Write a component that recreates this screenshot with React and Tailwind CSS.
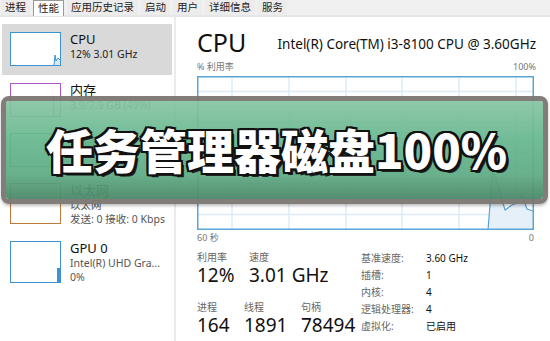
import React from "react";

const FONT = { fontFamily: "'Segoe UI', 'Noto Sans', 'Noto Sans CJK SC', sans-serif" };

const TABS = ["进程", "性能", "应用历史记录", "启动", "用户", "详细信息", "服务"];

function Thumb({ color, h, children }) {
  return (
    <div className={`w-[51px] shrink-0 border bg-white relative ${h}`} style={{ borderColor: color }}>
      {children}
    </div>
  );
}

function SideItem({ active, color, h, itemH, title, lines, spark }) {
  return (
    <div className={`mx-[2px] flex items-start pl-[8px] ${itemH} ${active ? "bg-[#d9d9d9]" : ""}`}>
      <div className="mt-[8px]">
        <Thumb color={color} h={h}>{spark}</Thumb>
      </div>
      <div className="ml-[9px] mt-[7px] leading-none">
        <div className="text-[13px] text-[#111] leading-[16px]">{title}</div>
        {lines.map((l, i) => (
          <div key={i} className={`text-[10.5px] leading-[14px] ${active ? "text-[#222]" : "text-[#555]"}`}>{l}</div>
        ))}
      </div>
    </div>
  );
}

function Graph() {
  const w = 337, h = 154;
  const vx = [35, 92, 149, 205, 262, 319];
  const hy = Array.from({ length: 9 }, (_, i) => 15.4 * (i + 1));
  const pts = [[291, 154], [296, 92], [308, 134], [315, 129], [320, 127], [325, 119], [330, 133], [336, 135]];
  const line = pts.map((p) => p.join(",")).join(" ");
  return (
    <svg width={w} height={h} className="block">
      <rect x="0" y="0" width={w} height={h} fill="#fff" />
      {vx.map((x) => <line key={x} x1={x} y1="0" x2={x} y2={h} stroke="#dcebf7" strokeWidth="1.5" />)}
      {hy.map((y) => <line key={y} x1="0" y1={y} x2={w} y2={y} stroke="#dcebf7" strokeWidth="1.5" />)}
      <polygon points={`${line} 336,154`} fill="#e6f0f9" />
      <polyline points={line} fill="none" stroke="#5aa5d6" strokeWidth="1.2" />
      <rect x="0.75" y="0.75" width={w - 1.5} height={h - 1.5} fill="none" stroke="#5aa5d6" strokeWidth="1.5" />
    </svg>
  );
}

function Stat({ label, value, w }) {
  return (
    <div className={w}>
      <div className="text-[10px] text-[#666] leading-[13px]">{label}</div>
      <div className="text-[19px] text-[#111] leading-[22px]">{value}</div>
    </div>
  );
}

export default function App() {
  const info = [
    ["基准速度:", "3.60 GHz"],
    ["插槽:", "1"],
    ["内核:", "4"],
    ["逻辑处理器:", "4"],
    ["虚拟化:", "已启用"],
  ];
  return (
    <div className="w-[550px] h-[341px] bg-white relative overflow-hidden" style={FONT}>
      {/* tabs */}
      <div className="h-[17px] bg-[#f0f0f0] border-b-2 border-[#e6e6e6] flex items-start pl-[1px]">
        {TABS.map((t, i) => (
          <div
            key={t}
            className={`h-[15px] px-[4px] mr-[3px] text-[10.5px] leading-[15px] text-[#222] ${i === 1 ? "bg-white border border-[#999] border-b-0 h-[16px]" : "bg-[#ececec]"}`}
          >
            {t}
          </div>
        ))}
      </div>

      <div className="flex">
        {/* sidebar */}
        <div className="w-[176px] h-[324px] pt-[7px] border-r-2 border-[#ebebeb]">
          <SideItem
            active
            color="#3c93d0"
            h="h-[34px]"
            itemH="h-[51px]"
            title="CPU"
            lines={["12% 3.01 GHz"]}
            spark={
              <svg className="absolute inset-0" width="49" height="32">
                <polygon points="43,32 44,22 45,28 47,25 49,27 49,32" fill="#d7e8f6" />
                <polyline points="43,32 44,22 45,28 47,25 49,27" fill="none" stroke="#3c93d0" strokeWidth="1" />
              </svg>
            }
          />
          <SideItem color="#a956c9" h="h-[34px]" itemH="h-[50px]" title="内存" lines={["3.9/7.9 GB (49%)"]}
            spark={<div className="absolute right-0 top-[12px] bottom-0 w-[7px] bg-[#f8f1fb] border-l border-[#a956c9]" />} />
          <SideItem color="#4da64d" h="h-[34px]" itemH="h-[50px]" title="磁盘 0 (C:)" lines={["0%"]} />
          <SideItem color="#c07a3c" h="h-[41px]" itemH="h-[58px]" title="以太网" lines={["以太网", "发送: 0 接收: 0 Kbps"]} />
          <SideItem color="#3c93d0" h="h-[42px]" itemH="h-[58px]" title="GPU 0" lines={["Intel(R) UHD Gra...", "0%"]}
            spark={<div className="absolute right-0 bottom-0 w-[3px] h-[14px] bg-[#3c93d0]" />} />
        </div>

        {/* main */}
        <div className="flex-1 pl-[21px] pr-[14px]">
          <div className="flex items-end justify-between h-[40px]">
            <div className="text-[25px] leading-[30px] text-[#111]">CPU</div>
            <div className="text-[13.5px] leading-[20px] text-[#111] mb-[3px]">Intel(R) Core(TM) i3-8100 CPU @ 3.60GHz</div>
          </div>
          <div className="flex justify-between text-[9px] leading-[19px] text-[#777]">
            <span>% 利用率</span>
            <span>100%</span>
          </div>
          <Graph />
          <div className="flex justify-between text-[9px] leading-[16px] text-[#777]">
            <span>60 秒</span>
            <span className="mr-[2px]">0</span>
          </div>

          <div className="flex mt-[5px]">
            <div className="w-[164px]">
              <div className="flex">
                <Stat label="利用率" value="12%" w="w-[52px]" />
                <Stat label="速度" value="3.01 GHz" w="w-[100px]" />
              </div>
              <div className="flex mt-[15px]">
                <Stat label="进程" value="164" w="w-[47px]" />
                <Stat label="线程" value="1891" w="w-[57px]" />
                <Stat label="句柄" value="78494" w="w-[60px]" />
              </div>
            </div>
            <div className="flex flex-col text-[10px] leading-[17px] -mt-[1px]">
              {info.map(([k, v]) => (
                <div key={k} className="flex">
                  <span className="w-[65px] text-[#666]">{k}</span>
                  <span className="text-[#111]">{v}</span>
                </div>
              ))}
            </div>
          </div>
        </div>
      </div>

      {/* banner overlay */}
      <div className="absolute left-[1px] top-[96px] w-[547px] h-[108px] rounded-[8px] border-[5px] border-[#7b7671]/95 overflow-hidden shadow-[0_2px_3px_rgba(0,0,0,0.25)]">
        <div className="w-full h-full flex items-center justify-center bg-[linear-gradient(to_bottom,rgba(134,196,162,0.92)_0%,rgba(100,182,142,0.92)_40%,rgba(94,170,132,0.93)_75%,rgba(74,136,104,0.95)_100%)]">
          <div
            className="text-[47px] font-black text-white leading-none pl-[4px] -mt-[4px]"
            style={{
              fontFamily: "'Noto Sans CJK SC', 'Noto Sans', sans-serif",
              textShadow:
                "2px 0 0 #111, -2px 0 0 #111, 0 2px 0 #111, 0 -2px 0 #111, 2px 2px 0 #111, -2px -2px 0 #111, 2px -2px 0 #111, -2px 2px 0 #111, 3px 3px 0 #222",
            }}
          >
            任务管理器磁盘100%
          </div>
        </div>
      </div>
    </div>
  );
}
